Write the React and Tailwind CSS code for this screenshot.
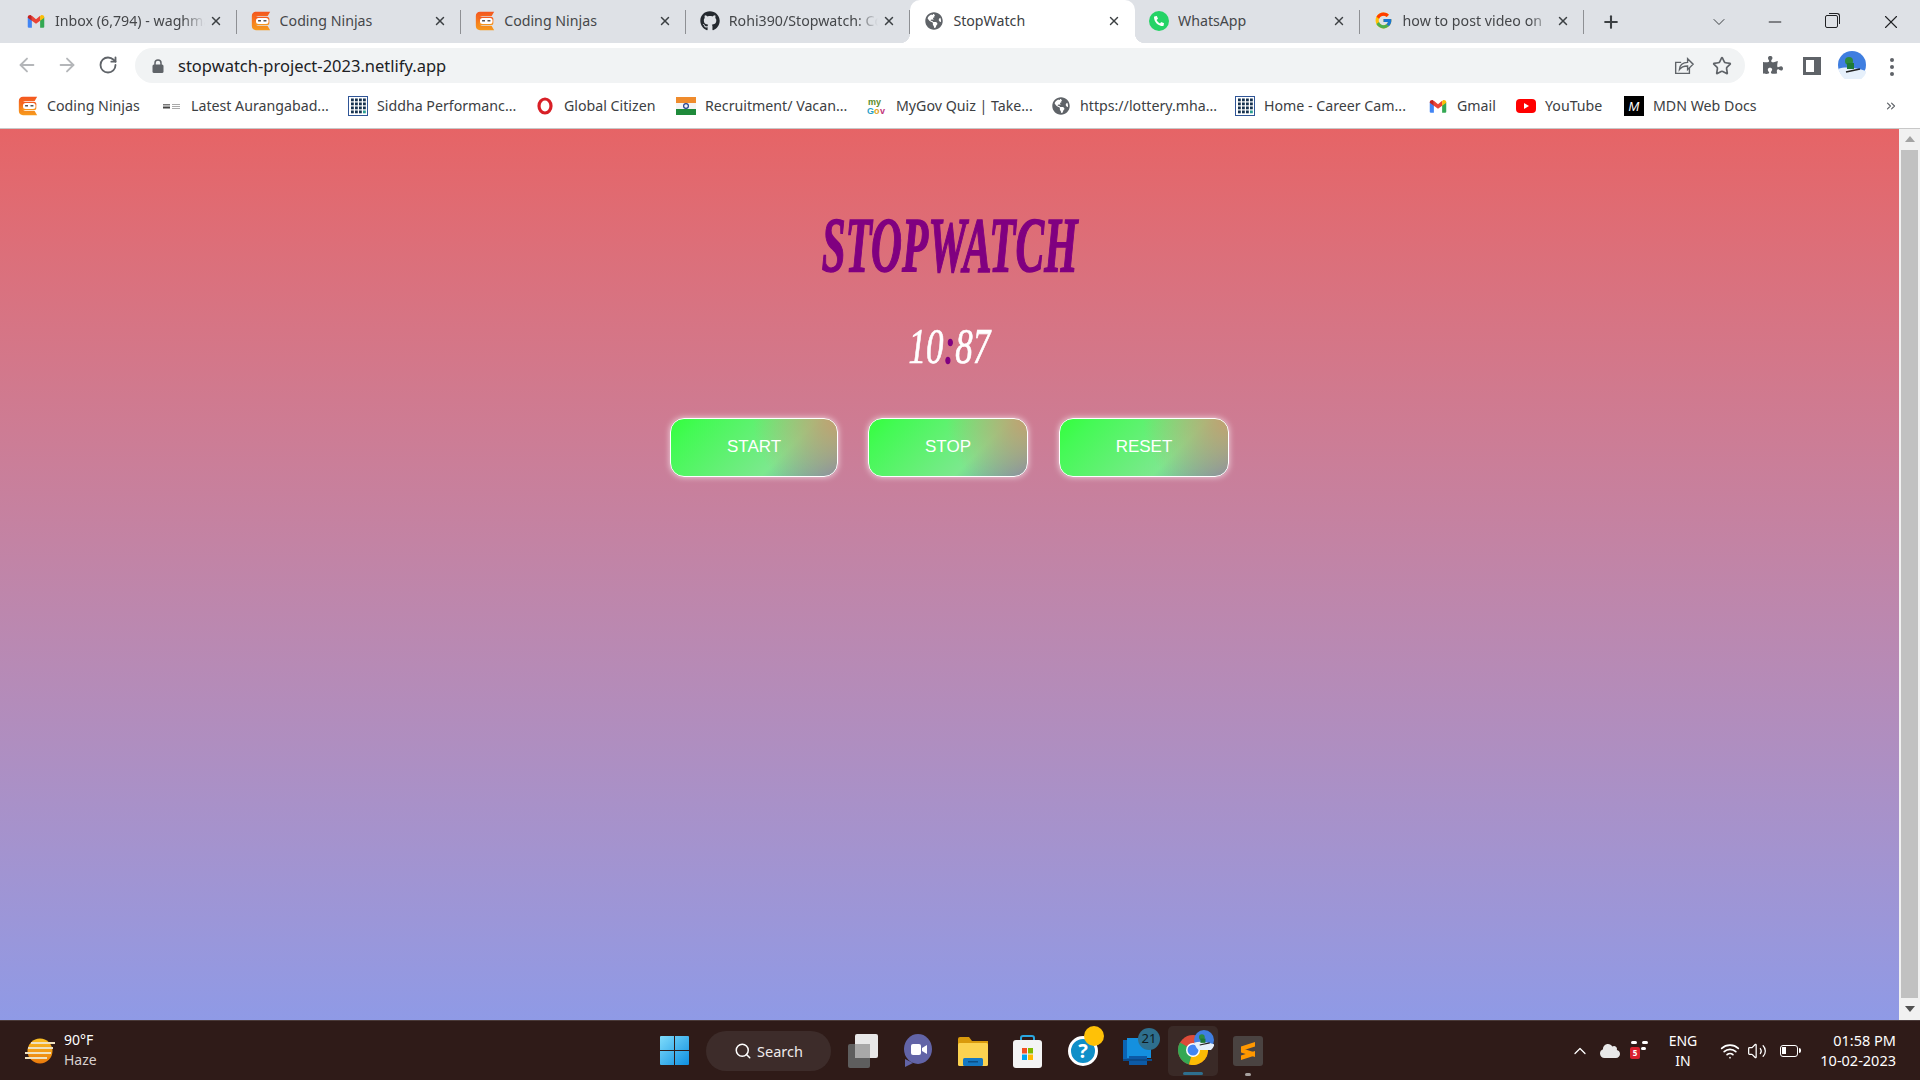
import React from "react";
import { ArrowLeft, ArrowRight, RotateCw, Star, ChevronDown, ChevronUp, Minus, X, Plus, Search, Wifi, Volume2, ChevronsRight } from "lucide-react";
import { FaGithub, FaGlobeAmericas, FaPuzzlePiece, FaCloud, FaPhoneAlt } from "react-icons/fa";
import { FcGoogle } from "react-icons/fc";

const Gmail = ({ s = 18 }) => (
  <svg width={s} height={s} viewBox="0 0 24 24">
    <path d="M1 7v12.5A1.5 1.5 0 0 0 2.5 21H6.5V10.5z" fill="#4285F4" />
    <path d="M23 7v12.5a1.5 1.5 0 0 1-1.500 1.500H17.500V10.500z" fill="#34A853" />
    <path d="M6.500 5 12 9.500 17.500 5v6.500L12 15.500 6.500 11.500z" fill="#EA4335" />
    <path d="M1 7c0-2.500 3-3.500 4.500-2.500l1 .7v6.300L1 7.500z" fill="#C5221F" />
    <path d="M23 7c0-2.500-3-3.500-4.500-2.500l-1 .7v6.300l5.500-4z" fill="#FBBC04" />
  </svg>
);

const Ninja = ({ s = 22 }) => (
  <svg width={s} height={s} viewBox="0 0 24 24">
    <defs>
      <linearGradient id="cn" x1="0" y1="0" x2="0" y2="1">
        <stop offset="0" stopColor="#f4561f" />
        <stop offset="1" stopColor="#f79a1c" />
      </linearGradient>
    </defs>
    <path d="M6 1h17l-3 5H9c-2 0-3 1-3 3v6c0 2 1 3 3 3h11l3 5H6c-3 0-5-2-5-5V6c0-3 2-5 5-5z" fill="url(#cn)" />
    <rect x="4" y="7" width="18" height="10" rx="3" fill="url(#cn)" />
    <rect x="6" y="8.500" width="15" height="7" rx="3" fill="#fff" />
    <rect x="8.500" y="11" width="3.500" height="1.500" fill="#333" />
    <rect x="15" y="11" width="3.500" height="1.500" fill="#333" />
  </svg>
);

const Grid = () => (
  <svg width="20" height="20" viewBox="0 0 20 20">
    <rect x="0.500" y="0.500" width="19" height="19" fill="#fff" stroke="#2f5597" />
    {[3, 7, 11, 15].flatMap((x) =>
      [2.500, 6.500, 10.500, 14.500].map((y) => (
        <rect key={x + "-" + y} x={x} y={y} width="2.800" height="2.800" fill={x === 15 && y === 14.500 ? "#2a9d8f" : "#16324f"} />
      ))
    )}
  </svg>
);

const Opera = () => (
  <svg width="20" height="20" viewBox="0 0 20 20">
    <ellipse cx="10" cy="10" rx="6" ry="7" fill="none" stroke="#d81f26" strokeWidth="3.200" />
  </svg>
);

const Latest = () => (
  <svg width="20" height="20" viewBox="0 0 20 20">
    <rect x="1" y="8" width="7" height="1.500" fill="#777" />
    <rect x="1" y="10.500" width="7" height="2" fill="#444" />
    <rect x="10" y="8" width="8" height="1" fill="#aaa" />
    <rect x="10" y="10" width="8" height="1" fill="#aaa" />
    <rect x="10" y="12" width="8" height="1" fill="#aaa" />
  </svg>
);

const Flag = () => (
  <svg width="20" height="20" viewBox="0 0 20 20">
    <rect x="0" y="1" width="20" height="6" fill="#ef8b2c" />
    <rect x="0" y="7" width="20" height="6" fill="#f4f4f4" />
    <rect x="0" y="13" width="20" height="6" fill="#1f8a3b" />
    <circle cx="10" cy="10" r="2.400" fill="none" stroke="#23408e" strokeWidth="1.200" />
  </svg>
);

const MyGov = () => (
  <svg width="20" height="20" viewBox="0 0 20 20" fontFamily="'Liberation Sans',sans-serif" fontWeight="700" fontSize="9">
    <text x="1" y="9" fill="#5b8c2a">my</text>
    <text x="0" y="18" fill="#2a9fc8">G</text>
    <text x="7" y="18" fill="#e0a21b">o</text>
    <text x="13" y="18" fill="#c2327a">v</text>
  </svg>
);

const Youtube = () => (
  <svg width="20" height="20" viewBox="0 0 20 20">
    <rect x="0" y="3" width="20" height="14" rx="4" fill="#f00" />
    <path d="M8 7l5 3-5 3z" fill="#fff" />
  </svg>
);

const Mdn = () => (
  <span className="flex h-5 w-5 items-center justify-center bg-black text-[13px] italic leading-none text-white [font-family:'Liberation_Sans',sans-serif]">M</span>
);

const Whats = () => (
  <span className="relative flex h-5 w-5 items-center justify-center rounded-full bg-[#25d366]">
    <FaPhoneAlt className="h-[10px] w-[10px] text-white" />
  </span>
);

const Globe = ({ s = 18 }) => <FaGlobeAmericas size={s} className="text-[#5f6368]" />;

const tabs = [
  { t: "Inbox (6,794) - waghmare", i: <Gmail />, fade: true },
  { t: "Coding Ninjas", i: <Ninja /> },
  { t: "Coding Ninjas", i: <Ninja /> },
  { t: "Rohi390/Stopwatch: Coding", i: <FaGithub size={20} className="text-[#24292f]" />, fade: true },
  { t: "StopWatch", i: <Globe />, active: true },
  { t: "WhatsApp", i: <Whats /> },
  { t: "how to post video on", i: <FcGoogle size={19} />, fade: true },
];

const marks = [
  { t: "Coding Ninjas", w: "w-[144px]", i: <Ninja /> },
  { t: "Latest Aurangabad...", w: "w-[186px]", i: <Latest /> },
  { t: "Siddha Performanc...", w: "w-[187px]", i: <Grid /> },
  { t: "Global Citizen", w: "w-[141px]", i: <Opera /> },
  { t: "Recruitment/ Vacan...", w: "w-[191px]", i: <Flag /> },
  { t: "MyGov Quiz | Take...", w: "w-[184px]", i: <MyGov /> },
  { t: "https://lottery.mha...", w: "w-[184px]", i: <Globe /> },
  { t: "Home - Career Cam...", w: "w-[193px]", i: <Grid /> },
  { t: "Gmail", w: "w-[88px]", i: <Gmail /> },
  { t: "YouTube", w: "w-[108px]", i: <Youtube /> },
  { t: "MDN Web Docs", w: "w-[136px]", i: <Mdn /> },
];

const Avatar = ({ s = 28 }) => (
  <svg width={s} height={s} viewBox="0 0 28 28">
    <circle cx="14" cy="14" r="14" fill="#3f7ee0" />
    <path d="M0 18c8-3 18-1 28 2v2a14 14 0 0 1-26 0z" fill="#e6f0fb" />
    <circle cx="11" cy="10" r="4" fill="#2d8a3e" />
    <rect x="9" y="12" width="7" height="6" fill="#1e7a36" />
    <path d="M8 21l14-3" stroke="#222" strokeWidth="1.500" />
  </svg>
);

function Tab({ t, i, active, fade, last }) {
  return (
    <div className={`relative flex h-[43px] w-[224.600px] shrink-0 items-center pb-[2px] pl-[14px] pr-[14px] ${active ? "rounded-t-[10px] bg-white" : ""}`}>
      {active && (
        <>
          <span className="absolute bottom-0 left-[-10px] h-[10px] w-[10px] bg-[radial-gradient(circle_at_0_0,transparent_10px,white_10.500px)]" />
          <span className="absolute bottom-0 right-[-10px] h-[10px] w-[10px] bg-[radial-gradient(circle_at_100%_0,transparent_10px,white_10.500px)]" />
        </>
      )}
      <span className="flex w-[20px] shrink-0 items-center justify-center">{i}</span>
      <span className={`ml-[9px] min-w-0 flex-1 overflow-hidden whitespace-nowrap text-[14.200px] leading-5 ${active ? "text-[#3c4043]" : "text-[#45474a]"} ${fade ? "[mask-image:linear-gradient(to_right,black_85%,transparent)]" : ""}`}>{t}</span>
      <X size={14} strokeWidth={2.500} className="ml-[4px] shrink-0 text-[#3c4043]" />
      {!last && !active && <span className="absolute right-0 top-[10px] h-[24px] w-px bg-[#8e9094]" />}
    </div>
  );
}

const btn = "h-[59px] rounded-[14px] border-[1.500px] border-white pb-[2px] text-[17px] leading-none text-white [font-family:'Liberation_Sans',sans-serif] shadow-[0_0_6px_rgba(255,255,255,0.7)] bg-[radial-gradient(circle_at_100%_0%,#c2a070_0%,rgba(194,160,112,0)_48%),linear-gradient(135deg,#33ff3c_0%,#44fa55_15%,#7ce88e_66%,#7488b4_100%)]";

export default function App() {
  return (
    <div className="flex h-[1080px] w-[1920px] flex-col overflow-hidden bg-white [font-family:'Noto_Sans',sans-serif]">
      {/* tab strip */}
      <div className="flex h-[43px] shrink-0 items-center bg-[#dee1e6] pl-[12px]">
        {tabs.map((tab, k) => (
          <Tab key={k} {...tab} />
        ))}
        <Plus size={20} strokeWidth={2.500} className="ml-[17px] shrink-0 text-[#3c4043]" />
        <ChevronDown size={20} strokeWidth={1.200} className="ml-[88px] shrink-0 text-[#3c4043]" />
        <Minus size={20} strokeWidth={1.200} className="ml-[36px] shrink-0 text-[#202124]" />
        <span className="relative ml-[40px] h-[13px] w-[13px] shrink-0 rounded-[2px] border-[1.500px] border-[#202124]">
          <span className="absolute right-[-3px] top-[-3px] h-[11px] w-[11px] rounded-tr-[3px] border-r border-t border-[#202124]" />
        </span>
        <X size={22} strokeWidth={1.200} className="ml-[42px] shrink-0 text-[#202124]" />
      </div>

      {/* toolbar */}
      <div className="flex h-[45px] shrink-0 items-start bg-white pt-[5px]">
        <ArrowLeft size={22} strokeWidth={2} className="ml-[16px] mt-[6px] shrink-0 text-[#b4b6b9]" />
        <ArrowRight size={22} strokeWidth={2} className="ml-[18px] mt-[6px] shrink-0 text-[#b4b6b9]" />
        <RotateCw size={20} strokeWidth={2.200} className="ml-[20px] mt-[7px] shrink-0 text-[#5f6368]" />
        <div className="ml-[17px] flex h-[35px] w-[1610px] shrink-0 items-center rounded-full bg-[#f1f3f4] pl-[17px]">
          <svg width="12" height="14" viewBox="0 0 12 14" className="shrink-0">
            <path d="M3 6V4a3 3 0 0 1 6 0v2" fill="none" stroke="#5f6368" strokeWidth="1.500" />
            <rect x="0.500" y="5.500" width="11" height="8.500" rx="1.500" fill="#5f6368" />
          </svg>
          <span className="ml-[14px] text-[16.500px] leading-5 text-[#202124]">stopwatch-project-2023.netlify.app</span>
          <svg width="22" height="22" viewBox="0 0 24 24" fill="none" stroke="#5f6368" strokeWidth="1.500" className="ml-auto shrink-0">
            <path d="M19 14v6H4V8h6" />
            <path d="M8 16c0-5 4-8 9-8V4l6 6-6 6v-4c-4 0-7 1-9 4z" />
          </svg>
          <Star size={20} strokeWidth={2} className="ml-[18px] mr-[13px] shrink-0 text-[#5f6368]" />
        </div>
        <FaPuzzlePiece size={20} className="ml-[18px] mt-[7px] shrink-0 text-[#5f6368]" />
        <span className="ml-[20px] mt-[9px] flex h-[18px] w-[18px] shrink-0 border-[3px] border-r-[7px] border-[#5f6368] bg-white" />
        <span className="ml-[17px] mt-[3px] shrink-0"><Avatar /></span>
        <span className="ml-[24px] mt-[10px] flex shrink-0 flex-col gap-[3px]">
          <span className="h-[4px] w-[4px] rounded-full bg-[#5f6368]" />
          <span className="h-[4px] w-[4px] rounded-full bg-[#5f6368]" />
          <span className="h-[4px] w-[4px] rounded-full bg-[#5f6368]" />
        </span>
      </div>

      {/* bookmarks */}
      <div className="flex h-[41px] shrink-0 items-center border-b border-[#c8c8c8] bg-white pb-[4px] pl-[18px]">
        {marks.map((m) => (
          <div key={m.t} className={`flex shrink-0 items-center ${m.w}`}>
            <span className="flex w-[20px] shrink-0 items-center justify-center">{m.i}</span>
            <span className="ml-[9px] whitespace-nowrap text-[14.200px] leading-5 text-[#3c4043]">{m.t}</span>
          </div>
        ))}
        <ChevronsRight size={14} strokeWidth={2} className="ml-[124px] shrink-0 text-[#5f6368]" />
      </div>

      {/* page */}
      <div className="flex min-h-0 flex-1">
        <main className="flex min-w-0 flex-1 flex-col items-center bg-linear-to-b from-[#e66466] to-[#8f9ae6] pt-[80px]">
          <h1 className="h-[72px] scale-x-[0.55] whitespace-nowrap text-[78px] font-bold italic leading-[72px] text-[#800080] [-webkit-text-stroke:1.500px_#800080] [font-family:'Liberation_Serif',serif]">STOPWATCH</h1>
          <div className="mt-[40px] h-[50px] scale-x-[0.7] whitespace-nowrap text-[50px] italic leading-[50px] text-white [-webkit-text-stroke:0.700px_#ffffff] [font-family:'Liberation_Serif',serif]">
            10<span className="text-[#800080] [-webkit-text-stroke:1.500px_#800080]">:</span>87
          </div>
          <div className="mt-[47px] flex items-center">
            <button className={`${btn} w-[168px]`}>START</button>
            <button className={`${btn} ml-[30px] w-[160px]`}>STOP</button>
            <button className={`${btn} ml-[31px] w-[170px]`}>RESET</button>
          </div>
        </main>
        <div className="flex w-[21px] shrink-0 flex-col items-center bg-[#f1f1f1]">
          <span className="mt-[7px] h-0 w-0 border-x-[5px] border-b-[6px] border-x-transparent border-b-[#a3a3a3]" />
          <span className="mt-[8px] h-[848px] w-[17px] bg-[#c1c1c1]" />
          <span className="mt-[8px] h-0 w-0 border-x-[5px] border-t-[6px] border-x-transparent border-t-[#505050]" />
        </div>
      </div>

      {/* taskbar */}
      <div className="flex h-[60px] shrink-0 items-center border-t border-[#4a3a38] bg-[#2f1b18] pl-[25px] text-white">
        <div className="flex w-[635px] shrink-0 items-center">
          <svg width="30" height="26" viewBox="0 0 30 26" className="shrink-0">
            <defs>
              <linearGradient id="sun" x1="0" y1="0" x2="0" y2="1">
                <stop offset="0" stopColor="#fbbf24" />
                <stop offset="1" stopColor="#ea7a0c" />
              </linearGradient>
            </defs>
            <circle cx="15" cy="13" r="12.500" fill="url(#sun)" />
            <g fill="#efe2c0">
              <rect x="6" y="4" width="24" height="2" />
              <rect x="3" y="9" width="25" height="2" />
              <rect x="0" y="14" width="26" height="2" />
              <rect x="0" y="19" width="22" height="2" />
            </g>
          </svg>
          <div className="ml-[9px] flex flex-col pb-[1px] text-[14px] leading-[20px]">
            <span>90°F</span>
            <span className="text-[#d8d0ce]">Haze</span>
          </div>
        </div>

        <svg width="29" height="29" viewBox="0 0 29 29" className="shrink-0">
          <defs>
            <linearGradient id="win" x1="0" y1="0" x2="1" y2="1">
              <stop offset="0" stopColor="#7fdcfb" />
              <stop offset="1" stopColor="#0e8fe0" />
            </linearGradient>
          </defs>
          <path d="M1 0h13v14H0V1a1 1 0 0 1 1-1zM15 0h13a1 1 0 0 1 1 1v13H15zM0 15h14v14H1a1 1 0 0 1-1-1zM15 15h14v13a1 1 0 0 1-1 1H15z" fill="url(#win)" />
        </svg>

        <div className="ml-[17px] flex h-[40px] w-[125px] shrink-0 items-center justify-center gap-[5px] rounded-full bg-[#3d2c2a]">
          <Search size={18} strokeWidth={2} className="text-white" />
          <span className="text-[14.500px] leading-5 text-[#efeaea]">Search</span>
        </div>

        <svg width="30" height="34" viewBox="0 0 30 34" className="ml-[17px] shrink-0">
          <rect x="0" y="10" width="22" height="24" rx="2" fill="#5e5e5e" />
          <rect x="7" y="0" width="23" height="24" rx="2" fill="#e8e8e8" />
          <rect x="7" y="10" width="15" height="14" fill="#a8a8a8" />
        </svg>

        <svg width="29" height="34" viewBox="0 0 29 34" className="ml-[25px] shrink-0">
          <ellipse cx="15" cy="15" rx="14" ry="15" fill="#6264a7" />
          <path d="M2 25v8l8-4z" fill="#6264a7" />
          <rect x="8" y="10" width="10" height="11" rx="2" fill="#fff" />
          <path d="M19 14l5-3v9l-5-3z" fill="#fff" />
        </svg>

        <svg width="30" height="30" viewBox="0 0 30 30" className="ml-[26px] shrink-0">
          <path d="M0 3a2 2 0 0 1 2-2h9l3 4h16v4H0z" fill="#d99a0c" />
          <rect x="0" y="7" width="30" height="23" rx="1.500" fill="#fbd250" />
          <rect x="5" y="22" width="20" height="8" rx="1.500" fill="#1578c2" />
          <rect x="10" y="25" width="10" height="1.500" fill="#0b4f87" />
        </svg>

        <svg width="29" height="34" viewBox="0 0 29 34" className="ml-[25px] shrink-0">
          <path d="M8 8V4a2 2 0 0 1 2-2h9a2 2 0 0 1 2 2v4" fill="none" stroke="#2aa7e0" strokeWidth="2" />
          <rect x="0" y="6" width="29" height="28" rx="3" fill="#f4f4f4" />
          <rect x="9" y="14" width="5" height="5.500" fill="#f25022" />
          <rect x="15" y="14" width="5" height="5.500" fill="#7fba00" />
          <rect x="9" y="20.500" width="5" height="5.500" fill="#00a4ef" />
          <rect x="15" y="20.500" width="5" height="5.500" fill="#ffb900" />
        </svg>

        <div className="relative ml-[26px] flex h-[30px] w-[36px] shrink-0 items-center">
          <span className="flex h-[30px] w-[30px] items-center justify-center rounded-full border-[3px] border-white bg-[#0f8fc8] text-[20px] font-bold leading-none text-white">?</span>
          <span className="absolute right-0 top-[-10px] h-[20px] w-[20px] rounded-full bg-[#ffc107]" />
        </div>

        <div className="relative ml-[19px] flex h-[30px] w-[37px] shrink-0 items-center">
          <svg width="29" height="30" viewBox="0 0 29 30" className="shrink-0">
            <rect x="0" y="4" width="10" height="20" fill="#0a64b4" />
            <rect x="4" y="2" width="24" height="20" fill="#1490df" />
            <rect x="6" y="20" width="18" height="9" fill="#0c5aa6" />
            <rect x="0" y="23" width="29" height="2" fill="#0a4a8a" />
          </svg>
          <span className="absolute right-0 top-[-8px] flex h-[22px] w-[22px] items-center justify-center rounded-full bg-[#2e6f8e] text-[13px] leading-none text-[#0e1a20]">21</span>
        </div>

        <div className="relative ml-[8px] flex h-[50px] w-[50px] shrink-0 items-center justify-center rounded-[5px] bg-[#3a2a27]">
          <svg width="30" height="30" viewBox="0 0 30 30" className="absolute left-[10px] top-[9px]">
            <circle cx="15" cy="15" r="15" fill="#dd4b39" />
            <path d="M15 15 2 7.500A15 15 0 0 0 11 29.500z" fill="#34a853" />
            <path d="M15 15 11 29.500A15 15 0 0 0 28 7.500z" fill="#fbbc05" />
            <circle cx="15" cy="15" r="7" fill="#fff" />
            <circle cx="15" cy="15" r="5.500" fill="#4285f4" />
          </svg>
          <span className="absolute left-[26px] top-[4px]"><Avatar s={20} /></span>
          <span className="absolute bottom-[1px] left-[15px] h-[3px] w-[20px] rounded-full bg-[#2e6f8e]" />
        </div>

        <div className="relative ml-[15px] flex h-[30px] w-[30px] shrink-0 items-center justify-center rounded-[3px] bg-[#4a4341]">
          <svg width="16" height="20" viewBox="0 0 16 20" fill="#ff9800">
            <path d="M15 1 1 5.500V10l14-4.500z" />
            <path d="M1 7l14 4.500V16L1 11.500z" />
            <path d="M15 10 1 14.500V19l14-4.500z" />
          </svg>
          <span className="absolute bottom-[-10px] left-[12px] h-[3px] w-[6px] rounded-full bg-[#a8a2a0]" />
        </div>

        <ChevronUp size={20} strokeWidth={1.500} className="ml-[307px] shrink-0 text-white" />
        <FaCloud size={20} className="ml-[10px] shrink-0 text-[#e8e8e8]" />
        <div className="relative ml-[10px] h-[20px] w-[18px] shrink-0">
          <span className="absolute left-[1px] top-[0px] h-[3px] w-[6px] rounded-full bg-white" />
          <span className="absolute right-[0px] top-[0px] h-[3px] w-[6px] rounded-full bg-white" />
          <span className="absolute right-[2px] top-[6px] h-[3px] w-[5px] rounded-full bg-white" />
          <span className="absolute left-0 top-[6px] flex h-[12px] w-[10px] items-center justify-center rounded-[2px] bg-[#d9202e] text-[8px] font-bold leading-none text-white">5</span>
        </div>
        <div className="ml-[20px] flex w-[30px] shrink-0 flex-col items-center text-[14px] leading-[20px]">
          <span>ENG</span>
          <span>IN</span>
        </div>
        <Wifi size={20} strokeWidth={2} className="ml-[22px] shrink-0 text-white" />
        <Volume2 size={20} strokeWidth={1.500} className="ml-[7px] shrink-0 text-white" />
        <span className="relative ml-[13px] flex h-[12px] w-[18px] shrink-0 items-center rounded-[3px] border-[1.500px] border-white pl-[1px]">
          <span className="h-[7px] w-[4px] bg-white" />
          <span className="absolute right-[-4px] top-[2px] h-[5px] w-[2px] rounded-r-sm bg-white" />
        </span>
        <div className="flex flex-1 flex-col items-end pb-[1px] pr-[24px] text-[14.500px] leading-[20px]">
          <span>01:58 PM</span>
          <span>10-02-2023</span>
        </div>
      </div>
    </div>
  );
}
